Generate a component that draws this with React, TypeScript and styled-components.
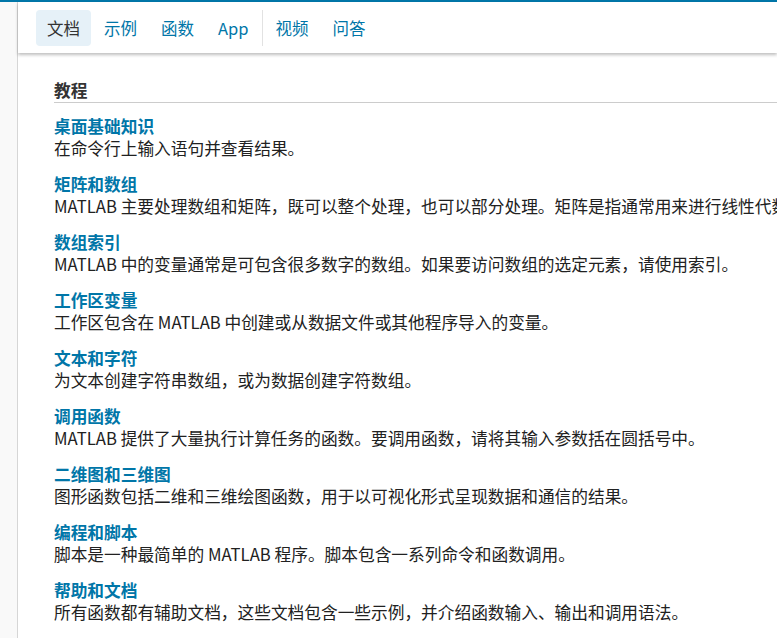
import styled, { createGlobalStyle } from 'styled-components';

const Global = createGlobalStyle`
  html, body { margin: 0; padding: 0; background: #fff; overflow: hidden; }
  body { font-family: "Noto Sans CJK SC", "Noto Sans", sans-serif; }
`;

const Page = styled.div`
  display: flex;
  height: 638px;
  border-top: 2px solid #0076a8;
  box-sizing: border-box;
`;

const Side = styled.div`
  width: 17px;
  flex: none;
  background: #f9f9f9;
  border-right: 1px solid #d6d6d6;
`;

const Main = styled.div`
  flex: 1;
  min-width: 0;
`;

const Nav = styled.nav`
  display: flex;
  align-items: center;
  height: 51px;
  padding-left: 18px;
  box-shadow: 0 2px 3px rgba(0, 0, 0, 0.25);
`;

const Tab = styled.div<{ $active?: boolean }>`
  height: 36px;
  display: flex;
  align-items: center;
  padding: 0 11px;
  margin-right: 2px;
  border-radius: 4px;
  font-size: 16.5px;
  color: ${(p) => (p.$active ? '#333' : '#0076a8')};
  background: ${(p) => (p.$active ? '#e6f1f8' : 'transparent')};
`;

const Divider = styled.div`
  width: 1px;
  height: 36px;
  background: #e2e2e2;
  margin: 0 2px 0 0;
`;

const Content = styled.div`
  padding: 26px 0 0 36px;
  white-space: nowrap;
  overflow: hidden;
`;

const Heading = styled.h2`
  margin: 0 0 12px;
  font-size: 16.7px;
  font-weight: bold;
  color: #333;
  line-height: 23px;
  border-bottom: 1px solid #ccc;
`;

const Item = styled.div`
  margin-bottom: 14px;
`;

const Title = styled.div`
  font-size: 16.7px;
  font-weight: bold;
  color: #0076a8;
  line-height: 22px;
`;

const Desc = styled.div`
  font-size: 16.7px;
  color: #212121;
  line-height: 22px;
`;

const items = [
  ['桌面基础知识', '在命令行上输入语句并查看结果。'],
  ['矩阵和数组', 'MATLAB 主要处理数组和矩阵，既可以整个处理，也可以部分处理。矩阵是指通常用来进行线性代数运算的二维数组。'],
  ['数组索引', 'MATLAB 中的变量通常是可包含很多数字的数组。如果要访问数组的选定元素，请使用索引。'],
  ['工作区变量', '工作区包含在 MATLAB 中创建或从数据文件或其他程序导入的变量。'],
  ['文本和字符', '为文本创建字符串数组，或为数据创建字符数组。'],
  ['调用函数', 'MATLAB 提供了大量执行计算任务的函数。要调用函数，请将其输入参数括在圆括号中。'],
  ['二维图和三维图', '图形函数包括二维和三维绘图函数，用于以可视化形式呈现数据和通信的结果。'],
  ['编程和脚本', '脚本是一种最简单的 MATLAB 程序。脚本包含一系列命令和函数调用。'],
  ['帮助和文档', '所有函数都有辅助文档，这些文档包含一些示例，并介绍函数输入、输出和调用语法。'],
];

export default function App() {
  return (
    <Page>
      <Global />
      <Side />
      <Main>
        <Nav>
          <Tab $active>文档</Tab>
          <Tab>示例</Tab>
          <Tab>函数</Tab>
          <Tab>App</Tab>
          <Divider />
          <Tab>视频</Tab>
          <Tab>问答</Tab>
        </Nav>
        <Content>
          <Heading>教程</Heading>
          {items.map(([t, d]) => (
            <Item key={t}>
              <Title>{t}</Title>
              <Desc>{d}</Desc>
            </Item>
          ))}
        </Content>
      </Main>
    </Page>
  );
}
